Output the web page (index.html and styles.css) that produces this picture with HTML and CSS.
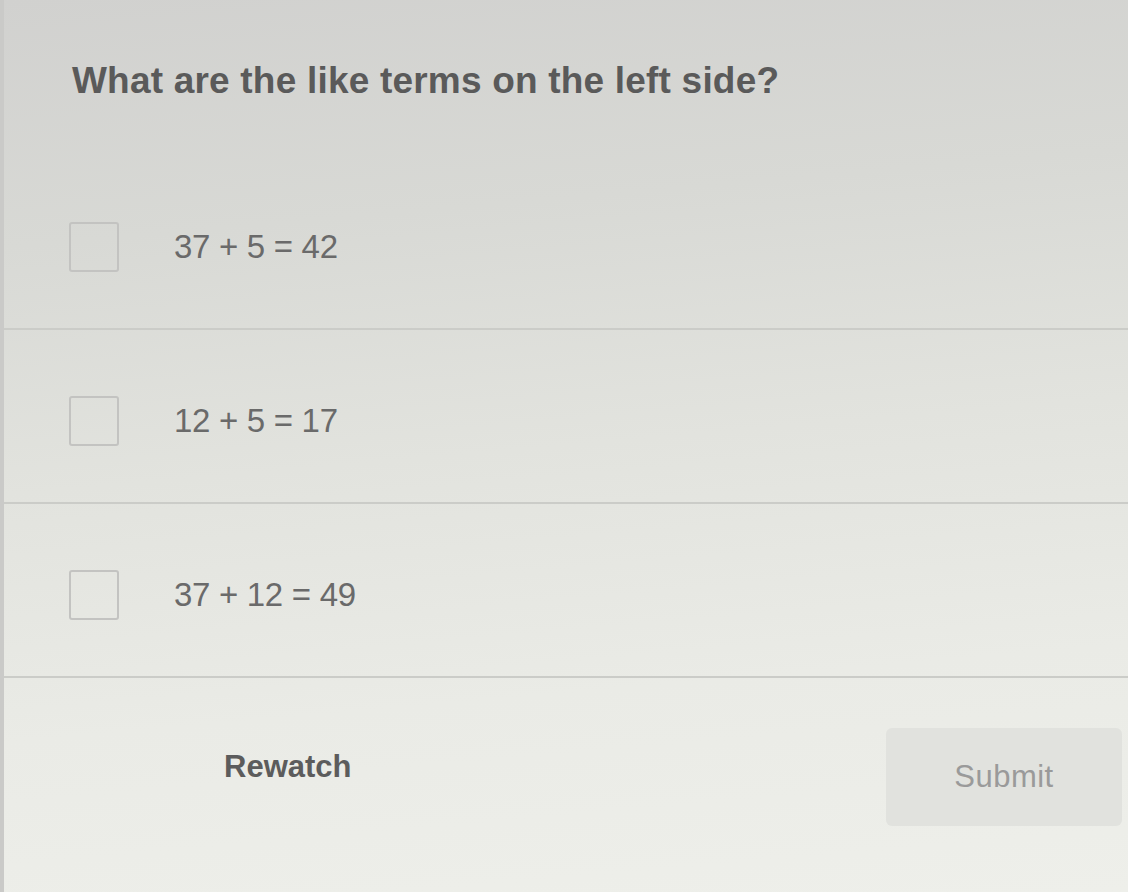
FILE: index.html
```html
<!DOCTYPE html>
<html lang="en">
<head>
<meta charset="utf-8">
<title>Like terms</title>
<link rel="stylesheet" href="styles.css">
</head>
<body>
<main class="quiz">
  <h1 class="question">What are the like terms on the left side?</h1>
  <ul class="options">
    <li class="option"><span class="box"></span><span class="label">37 + 5 = 42</span></li>
    <li class="option"><span class="box"></span><span class="label">12 + 5 = 17</span></li>
    <li class="option"><span class="box"></span><span class="label">37 + 12 = 49</span></li>
  </ul>
  <footer class="actions">
    <button class="rewatch" type="button">Rewatch</button>
    <button class="submit" type="button">Submit</button>
  </footer>
</main>
</body>
</html>
```
FILE: styles.css
```css
html, body {
  margin: 0;
  padding: 0;
  height: 100%;
}
body {
  background: linear-gradient(175deg, #d1d1cf 0%, #d8d9d5 25%, #e2e3de 50%, #eaebe6 75%, #eeefea 100%);
  font-family: "Liberation Sans", Arial, sans-serif;
  color: #555;
  overflow: hidden;
}
.quiz {
  display: flex;
  flex-direction: column;
  min-height: 100%;
  border-left: 4px solid #cacac8;
  box-sizing: border-box;
}
.question {
  margin: 0;
  padding: 59px 0 0 68px;
  font-size: 37px;
  line-height: 44px;
  font-weight: 700;
  color: #5a5a5a;
  letter-spacing: 0.2px;
}
.options {
  list-style: none;
  margin: 53px 0 0;
  padding: 0;
}
.option {
  display: flex;
  align-items: center;
  gap: 55px;
  padding: 66px 0 56px 65px;
  border-bottom: 2px solid #cbccc8;
}
.box {
  width: 46px;
  height: 46px;
  border: 2px solid #c3c3c1;
  border-radius: 3px;
  flex: none;
}
.label {
  font-size: 33px;
  line-height: 38px;
  color: #6a6a6a;
  letter-spacing: -0.3px;
}
.actions {
  display: flex;
  align-items: flex-start;
  justify-content: space-between;
  padding: 50px 6px 0 220px;
}
.rewatch {
  border: none;
  background: none;
  padding: 0;
  margin-top: 21px;
  font-family: inherit;
  font-size: 31px;
  line-height: 36px;
  font-weight: 700;
  color: #5c5c5c;
}
.submit {
  width: 236px;
  height: 98px;
  border: none;
  border-radius: 6px;
  background: #e1e2de;
  font-family: inherit;
  font-size: 31px;
  color: #9a9a9a;
  letter-spacing: 0.5px;
}
```
